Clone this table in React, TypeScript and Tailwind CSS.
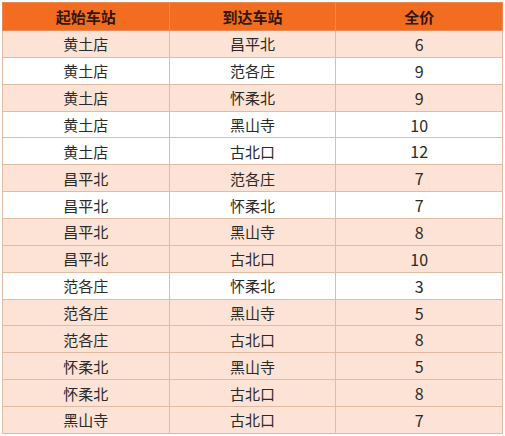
import React from "react";

type Row = { from: string; to: string; price: number; shade: boolean };

const rows: Row[] = [
  { from: "黄土店", to: "昌平北", price: 6, shade: true },
  { from: "黄土店", to: "范各庄", price: 9, shade: false },
  { from: "黄土店", to: "怀柔北", price: 9, shade: true },
  { from: "黄土店", to: "黑山寺", price: 10, shade: false },
  { from: "黄土店", to: "古北口", price: 12, shade: false },
  { from: "昌平北", to: "范各庄", price: 7, shade: true },
  { from: "昌平北", to: "怀柔北", price: 7, shade: false },
  { from: "昌平北", to: "黑山寺", price: 8, shade: true },
  { from: "昌平北", to: "古北口", price: 10, shade: true },
  { from: "范各庄", to: "怀柔北", price: 3, shade: false },
  { from: "范各庄", to: "黑山寺", price: 5, shade: true },
  { from: "范各庄", to: "古北口", price: 8, shade: true },
  { from: "怀柔北", to: "黑山寺", price: 5, shade: true },
  { from: "怀柔北", to: "古北口", price: 8, shade: true },
  { from: "黑山寺", to: "古北口", price: 7, shade: true },
];

export default function App() {
  return (
    <div
      className="w-[505px] h-[436px] bg-white pt-[2px] pl-[2px]"
      style={{ fontFamily: '"Noto Sans CJK SC", "Noto Sans", sans-serif' }}
    >
      <table className="w-[501px] border-collapse table-fixed text-[15px] text-[#2a2a2a]">
        <thead>
          <tr className="h-[28px] bg-[#f36d21]">
            {["起始车站", "到达车站", "全价"].map((h) => (
              <th
                key={h}
                className="border border-[#ec8a55] font-bold text-[#331608] text-center leading-none p-0"
              >
                {h}
              </th>
            ))}
          </tr>
        </thead>
        <tbody>
          {rows.map((r, i) => (
            <tr
              key={i}
              className={r.shade ? "h-[26.87px] bg-[#fce3d5]" : "h-[26.87px] bg-white"}
            >
              <td className="border border-[#e3bba5] text-center leading-none p-0">{r.from}</td>
              <td className="border border-[#e3bba5] text-center leading-none p-0">{r.to}</td>
              <td className="border border-[#e3bba5] text-center leading-none p-0 text-[16px]">
                {r.price}
              </td>
            </tr>
          ))}
        </tbody>
      </table>
    </div>
  );
}
